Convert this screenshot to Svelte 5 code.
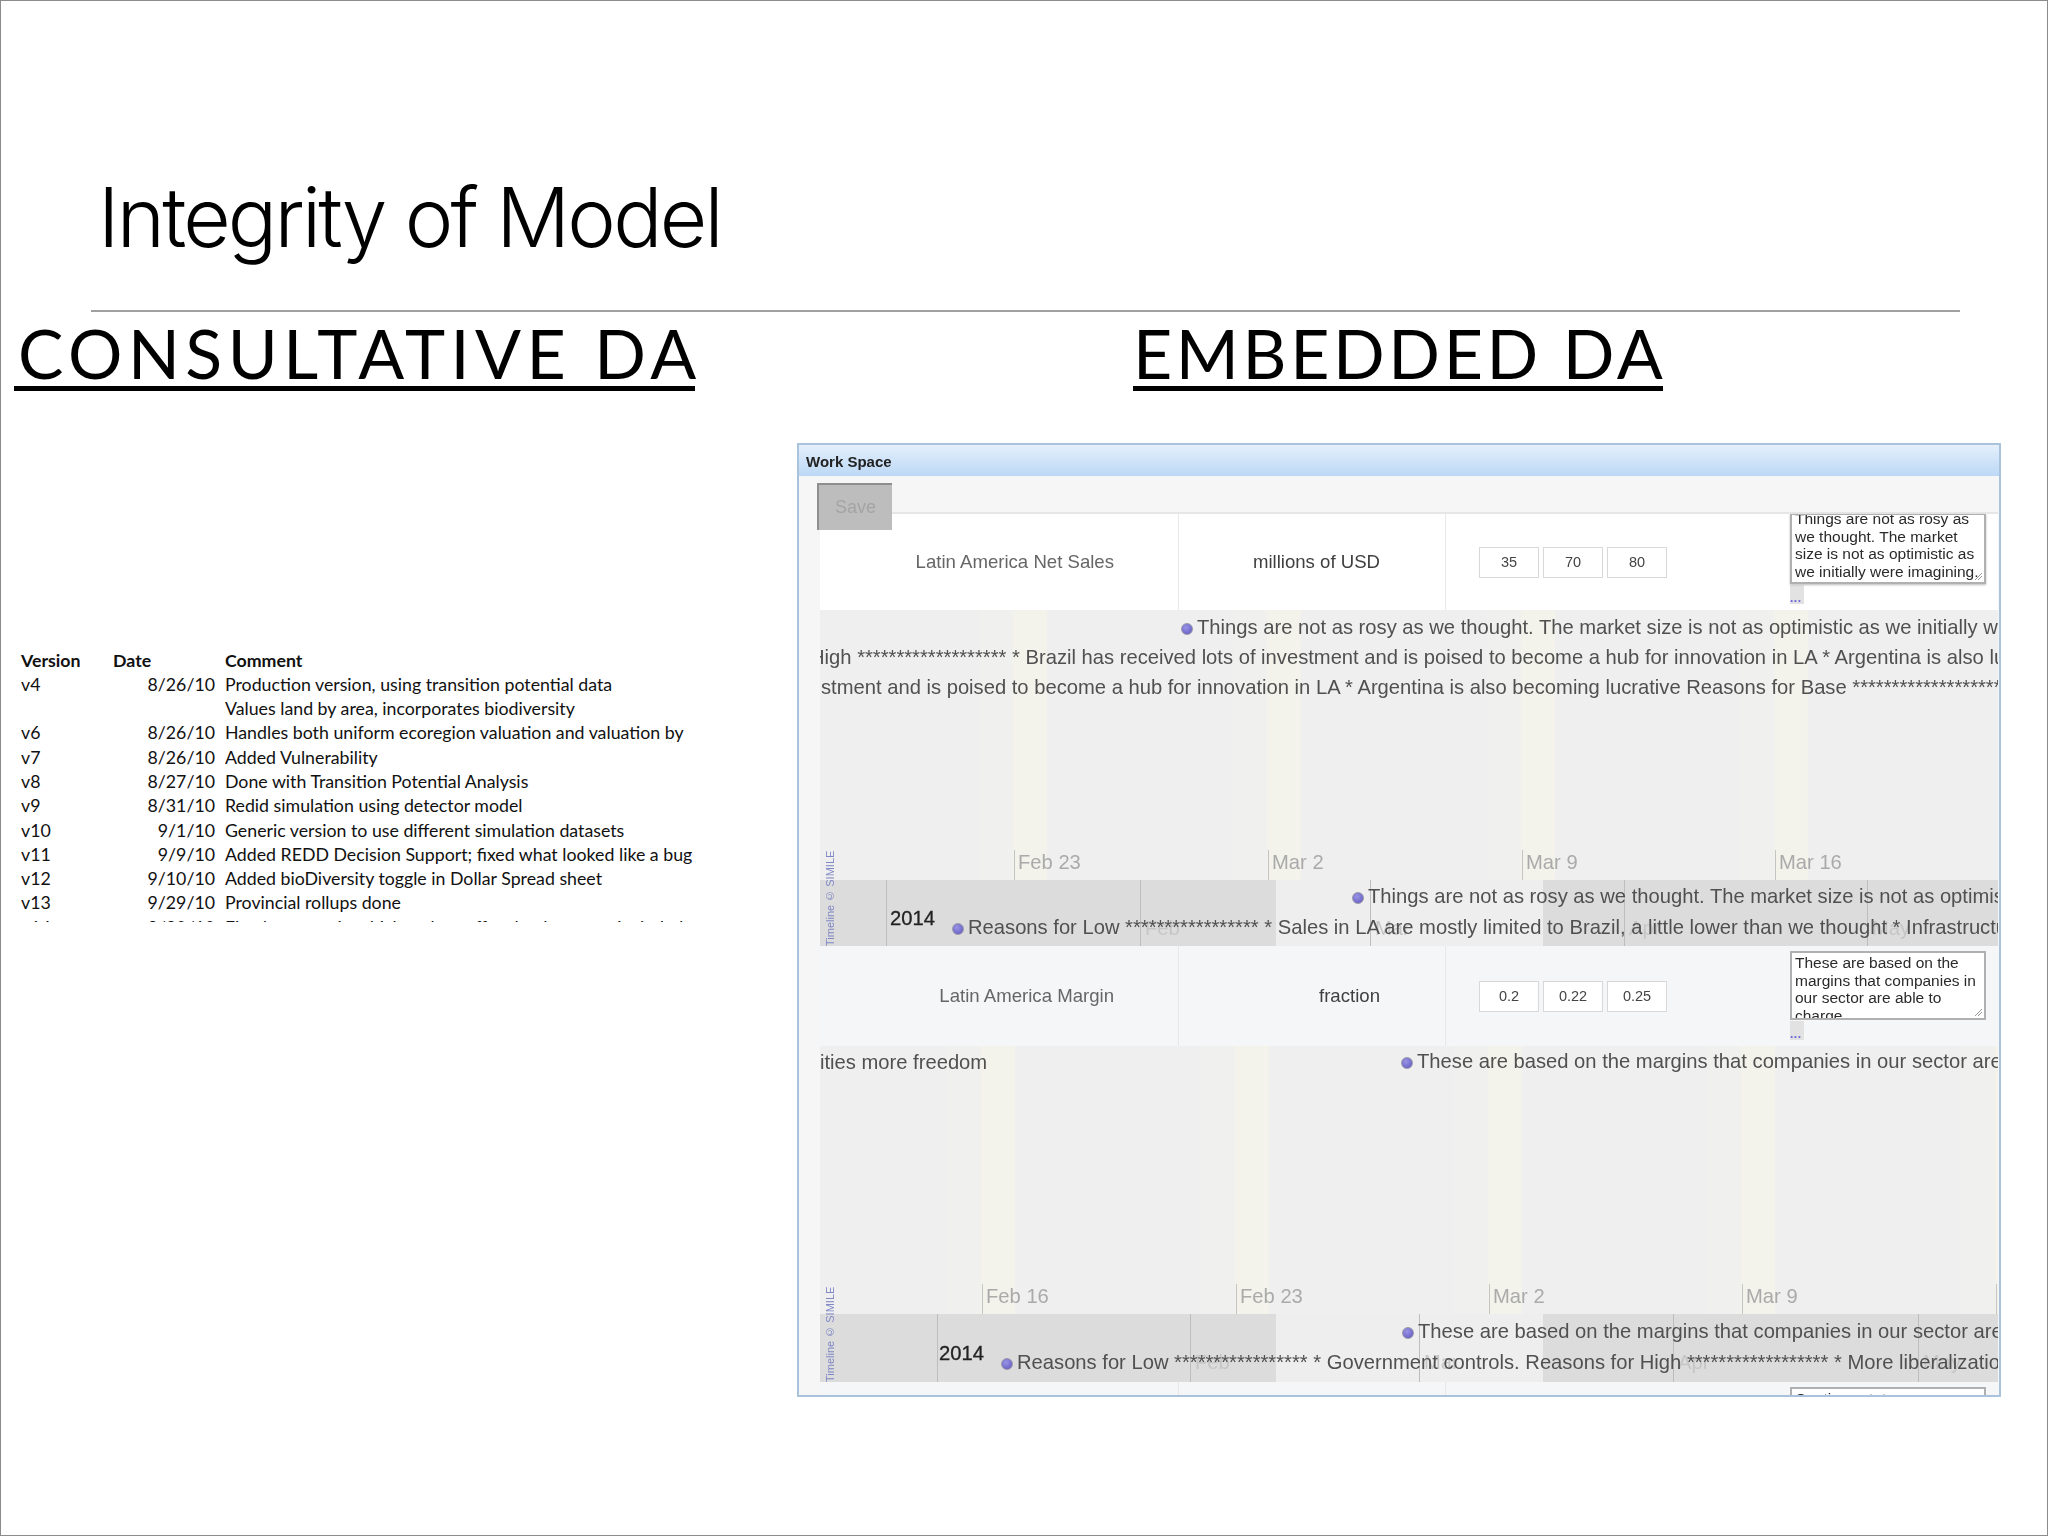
<script lang="ts">
  const versions = [
    ['v4', '8/26/10', 'Production version, using transition potential data'],
    ['', '', 'Values land by area, incorporates biodiversity'],
    ['v6', '8/26/10', 'Handles both uniform ecoregion valuation and valuation by'],
    ['v7', '8/26/10', 'Added Vulnerability'],
    ['v8', '8/27/10', 'Done with Transition Potential Analysis'],
    ['v9', '8/31/10', 'Redid simulation using detector model'],
    ['v10', '9/1/10', 'Generic version to use different simulation datasets'],
    ['v11', '9/9/10', 'Added REDD Decision Support; fixed what looked like a bug'],
    ['v12', '9/10/10', 'Added bioDiversity toggle in Dollar Spread sheet'],
    ['v13', '9/29/10', 'Provincial rollups done'],
    ['v14', '9/30/10', 'Fixed an error in which carbon offset land was not included']
  ];

  const stars = (n: number) => '*'.repeat(n);

  // all x values are measured from the left edge of the timeline, y is the text's centre
  const rows = [
    {
      label: 'Latin America Net Sales',
      unit: 'millions of USD',
      values: ['35', '70', '80'],
      note: ['Things are not as rosy as', 'we thought. The market', 'size is not as optimistic as', 'we initially were imagining.'],
      scrolled: true,
      bandH: 270,
      miniH: 66,
      ticks: [
        { x: 194, label: 'Feb 23' },
        { x: 448, label: 'Mar 2' },
        { x: 702, label: 'Mar 9' },
        { x: 955, label: 'Mar 16' }
      ],
      events: [
        { x: 361, y: 17, dot: true, text: 'Things are not as rosy as we thought. The market size is not as optimistic as we initially were imagining.' },
        { x: -10, y: 47, dot: false, text: `High ${stars(19)} * Brazil has received lots of investment and is poised to become a hub for innovation in LA * Argentina is also lucrative` },
        { x: 1, y: 77, dot: false, text: `stment and is poised to become a hub for innovation in LA * Argentina is also becoming lucrative Reasons for Base ${stars(20)}` }
      ],
      miniTicks: [
        { x: 66, label: '' },
        { x: 320, label: 'Feb' },
        { x: 550, label: 'Mar' },
        { x: 804, label: 'Apr' },
        { x: 1047, label: 'May' }
      ],
      year: { x: 70, y: 38 },
      miniEvents: [
        { x: 532, y: 16, dot: true, text: 'Things are not as rosy as we thought. The market size is not as optimistic as we initially were imagining.' },
        { x: 132, y: 47, dot: true, text: `Reasons for Low ${stars(17)} * Sales in LA are mostly limited to Brazil, a little lower than we thought * Infrastructure` }
      ]
    },
    {
      label: 'Latin America Margin',
      unit: 'fraction',
      values: ['0.2', '0.22', '0.25'],
      note: ['These are based on the', 'margins that companies in', 'our sector are able to', 'charge'],
      scrolled: false,
      bandH: 268,
      miniH: 68,
      ticks: [
        { x: 162, label: 'Feb 16' },
        { x: 416, label: 'Feb 23' },
        { x: 669, label: 'Mar 2' },
        { x: 922, label: 'Mar 9' },
        { x: 1176, label: '' }
      ],
      events: [
        { x: 0, y: 16, dot: false, text: 'ities more freedom' },
        { x: 581, y: 15, dot: true, text: 'These are based on the margins that companies in our sector are able to charge' }
      ],
      miniTicks: [
        { x: 117, label: '' },
        { x: 370, label: 'Feb' },
        { x: 599, label: 'Mar' },
        { x: 853, label: 'Apr' },
        { x: 1098, label: 'May' }
      ],
      year: { x: 119, y: 39 },
      miniEvents: [
        { x: 582, y: 17, dot: true, text: 'These are based on the margins that companies in our sector are able to charge' },
        { x: 181, y: 48, dot: true, text: `Reasons for Low ${stars(17)} * Government controls. Reasons for High ${stars(18)} * More liberalization` }
      ]
    }
  ];
</script>

{#snippet eventLine(ev)}
  <div class="event" style="left:{ev.x}px;top:{ev.y - 12}px">
    {#if ev.dot}<span class="dot"></span>{/if}{ev.text}
  </div>
{/snippet}

<div class="slide">
  <h1>Integrity of Model</h1>
  <div class="rule"></div>

  <div class="headings">
    <h2 class="consult">Consultative DA</h2>
    <h2 class="embed">Embedded DA</h2>
  </div>

  <div class="columns">
    <div class="sheet">
      <div class="sheet-row head">
        <span>Version</span><span>Date</span><span>Comment</span>
      </div>
      {#each versions as v}
        <div class="sheet-row">
          <span>{v[0]}</span><span class="date">{v[1]}</span><span>{v[2]}</span>
        </div>
      {/each}
    </div>

    <div class="panel">
      <div class="panel-title">Work Space</div>
      <div class="panel-body">
        <div class="toolbar"><button class="save">Save</button></div>

        {#each rows as row}
          <div class="row">
            <div class="label">{row.label}</div>
            <div class="unit">{row.unit}</div>
            <div class="values">
              {#each row.values as val}<div class="value">{val}</div>{/each}
            </div>
            <div class="notes">
              <div class="note" class:scrolled={row.scrolled}>
                <div class="note-text">
                  {#each row.note as line}<div>{line}</div>{/each}
                </div>
                <svg class="grip" width="10" height="10" viewBox="0 0 10 10">
                  <path d="M2 9 9 2M5 9 9 5" stroke="#999" fill="none" />
                </svg>
              </div>
              <div class="more"><span>...</span></div>
            </div>
          </div>

          <div class="timeline">
            <div class="band" style="height:{row.bandH}px">
              {#each row.ticks as t}
                <div class="stripe" style="left:{t.x - 35}px"></div>
              {/each}
              {#each row.ticks as t}
                <div class="tick" style="left:{t.x}px">{t.label}</div>
              {/each}
              {#each row.events as ev}
                {@render eventLine(ev)}
              {/each}
            </div>
            <div class="mini" style="height:{row.miniH}px">
              <div class="window"></div>
              {#each row.miniTicks as t}
                <div class="mini-tick" style="left:{t.x}px">{t.label}</div>
              {/each}
              <div class="year" style="left:{row.year.x}px;top:{row.year.y - 12}px">2014</div>
              {#each row.miniEvents as ev}
                {@render eventLine(ev)}
              {/each}
            </div>
            <div class="credit">Timeline © SIMILE</div>
          </div>
        {/each}

        <div class="row last">
          <div class="label"></div>
          <div class="unit"></div>
          <div class="values"></div>
          <div class="notes">
            <div class="note">
              <div class="note-text"><div>Continue status quo</div></div>
            </div>
          </div>
        </div>
      </div>
    </div>
  </div>
</div>

<style>
  :global(body) {
    margin: 0;
    background: #fff;
  }

  .slide {
    box-sizing: border-box;
    width: 2048px;
    height: 1536px;
    border: 1px solid #8c8c8c;
    background: #fff;
    overflow: hidden;
    font-family: 'Liberation Sans', Arial, sans-serif;
    color: #000;
  }

  h1 {
    margin: 0;
    padding: 168px 0 0 97px;
    height: 141px;
    font-family: Inter, 'Liberation Sans', sans-serif;
    font-weight: 300;
    font-size: 82px;
    line-height: 98px;
    letter-spacing: -2.8px;
  }

  .rule {
    margin-left: 90px;
    width: 1869px;
    height: 2px;
    background: #a0a0a0;
  }

  .headings {
    display: flex;
    height: 131px;
  }

  h2 {
    margin: 0;
    height: 74px;
    font-family: Lato, 'Noto Sans', sans-serif;
    font-weight: 400;
    font-size: 68px;
    line-height: 82px;
    text-transform: uppercase;
    border-bottom: 5px solid #000;
    white-space: nowrap;
  }

  .consult {
    margin-left: 13px;
    width: 677px;
    letter-spacing: 5.5px;
    padding-left: 4px;
  }

  .embed {
    margin-left: 438px;
    width: 530px;
    letter-spacing: 3.6px;
  }

  .columns {
    display: flex;
  }

  .sheet {
    width: 796px;
    height: 479px;
    padding-top: 204.5px;
    box-sizing: border-box;
    flex: none;
    font-family: Lato, 'Open Sans', sans-serif;
  }

  .sheet-row {
    display: grid;
    grid-template-columns: 92px 102px 1fr;
    height: 24.3px;
    line-height: 24.3px;
    padding-left: 20px;
    font-size: 17.75px;
    white-space: nowrap;
    color: #111;
    width: 680px;
    overflow: hidden;
  }

  .sheet-row span:nth-child(3) {
    padding-left: 10px;
  }

  .sheet-row:last-child {
    height: 7.5px;
  }

  .head {
    font-weight: 700;
  }

  .date {
    text-align: right;
  }

  .panel {
    flex: none;
    box-sizing: border-box;
    width: 1204px;
    height: 954px;
    border: 2px solid #a9c3dd;
    background: #f6f6f6;
    overflow: hidden;
    filter: blur(0.5px);
  }

  .panel-title {
    height: 31px;
    padding-left: 7px;
    line-height: 33px;
    font-size: 15px;
    font-weight: 700;
    color: #222;
    background: linear-gradient(#e4effb, #bcd8f6);
  }

  .panel-body {
    padding-left: 21px;
    padding-right: 1px;
  }

  .toolbar {
    height: 38px;
    padding-top: 7px;
    border-bottom: 2px solid #e6e6e6;
    box-sizing: border-box;
  }

  .save {
    position: relative;
    z-index: 2;
    display: block;
    margin: 0 0 0 -3px;
    padding: 0;
    width: 75px;
    height: 47px;
    border: 0;
    border-top: 2px solid #8e8e8e;
    border-left: 2px solid #8e8e8e;
    background: #bdbdbd;
    color: #a4a4a4;
    font-family: inherit;
    font-size: 18px;
  }

  .row {
    display: grid;
    grid-template-columns: 359px 267px 344px 1fr;
    height: 96px;
    background: #fff;
  }

  .timeline + .row {
    height: 100px;
    background: #f5f6f8;
  }

  .label,
  .unit {
    align-self: stretch;
    display: flex;
    align-items: center;
    justify-content: flex-end;
    font-size: 18.6px;
    border-right: 1px solid #e8e8e8;
  }

  .label {
    padding-right: 64px;
    color: #666;
  }

  .unit {
    padding-right: 65px;
    color: #3f3f3f;
  }

  .values {
    display: flex;
    align-items: center;
    gap: 4px;
    padding-left: 33px;
  }

  .value {
    box-sizing: border-box;
    width: 60px;
    height: 31px;
    line-height: 29px;
    border: 1px solid #d8d8d8;
    background: #fff;
    text-align: center;
    font-size: 14.5px;
    color: #444;
  }

  .notes {
    display: flex;
    flex-direction: column;
    align-items: flex-start;
  }

  .note {
    position: relative;
    box-sizing: border-box;
    margin-top: 5px;
    width: 196px;
    height: 69px;
    border: 2px solid #b0b0b0;
    background: #fff;
    overflow: hidden;
  }

  .note.scrolled {
    margin-top: 0;
    height: 70px;
    border-top-width: 1px;
    box-shadow: 0 1px 2px #bbb;
  }

  .note-text {
    padding: 1px 0 0 3px;
    font-size: 15.5px;
    line-height: 17.7px;
    color: #2a2a2a;
    white-space: nowrap;
  }

  .note.scrolled .note-text {
    margin-top: -6px;
  }

  .grip {
    position: absolute;
    right: 1px;
    bottom: 1px;
  }

  .more {
    box-sizing: border-box;
    width: 14px;
    height: 19px;
    margin-top: 1px;
    background: #e2e2e2;
    font-size: 12px;
    font-weight: 700;
    line-height: 12px;
    color: #6a63d8;
    display: flex;
    align-items: flex-end;
    letter-spacing: 0.5px;
  }

  .last {
    height: 14px;
  }

  .timeline {
    position: relative;
    overflow: hidden;
  }

  .band {
    position: relative;
    background: #efefef;
    overflow: hidden;
  }

  .stripe {
    position: absolute;
    top: 0;
    bottom: 0;
    width: 68px;
    background: linear-gradient(90deg, #f0f0ee 50%, #f3f3ec 50%);
  }

  .tick {
    position: absolute;
    bottom: 0;
    height: 30px;
    padding-left: 3px;
    border-left: 1px solid #c4c4c4;
    font-size: 20.2px;
    line-height: 24px;
    color: #aaa;
    white-space: nowrap;
  }

  .event {
    position: absolute;
    font-size: 20.2px;
    line-height: 24px;
    color: #505050;
    white-space: nowrap;
  }

  .dot {
    display: inline-block;
    width: 12px;
    height: 12px;
    margin-right: 4px;
    border-radius: 50%;
    border: 1px solid #9a9aa8;
    box-sizing: border-box;
    background: radial-gradient(circle at 40% 35%, #9a94e6, #5d54bd);
    vertical-align: -1px;
  }

  .mini {
    position: relative;
    background: #dcdcdc;
    overflow: hidden;
  }

  .window {
    position: absolute;
    top: 0;
    bottom: 0;
    left: 456px;
    width: 267px;
    background: #eeeeee;
  }

  .mini-tick {
    position: absolute;
    top: 0;
    bottom: 0;
    padding: 36px 0 0 4px;
    border-left: 1px solid #bdbdbd;
    font-size: 20.2px;
    line-height: 24px;
    color: #c6c6c6;
  }

  .year {
    position: absolute;
    font-size: 20.2px;
    line-height: 24px;
    color: #222;
    -webkit-text-stroke: 0.3px #222;
  }

  .credit {
    position: absolute;
    left: 2px;
    bottom: 0;
    height: 96px;
    writing-mode: vertical-rl;
    transform: rotate(180deg);
    font-size: 11px;
    line-height: 17px;
    color: #7f88c4;
    white-space: nowrap;
    text-align: left;
  }
</style>
